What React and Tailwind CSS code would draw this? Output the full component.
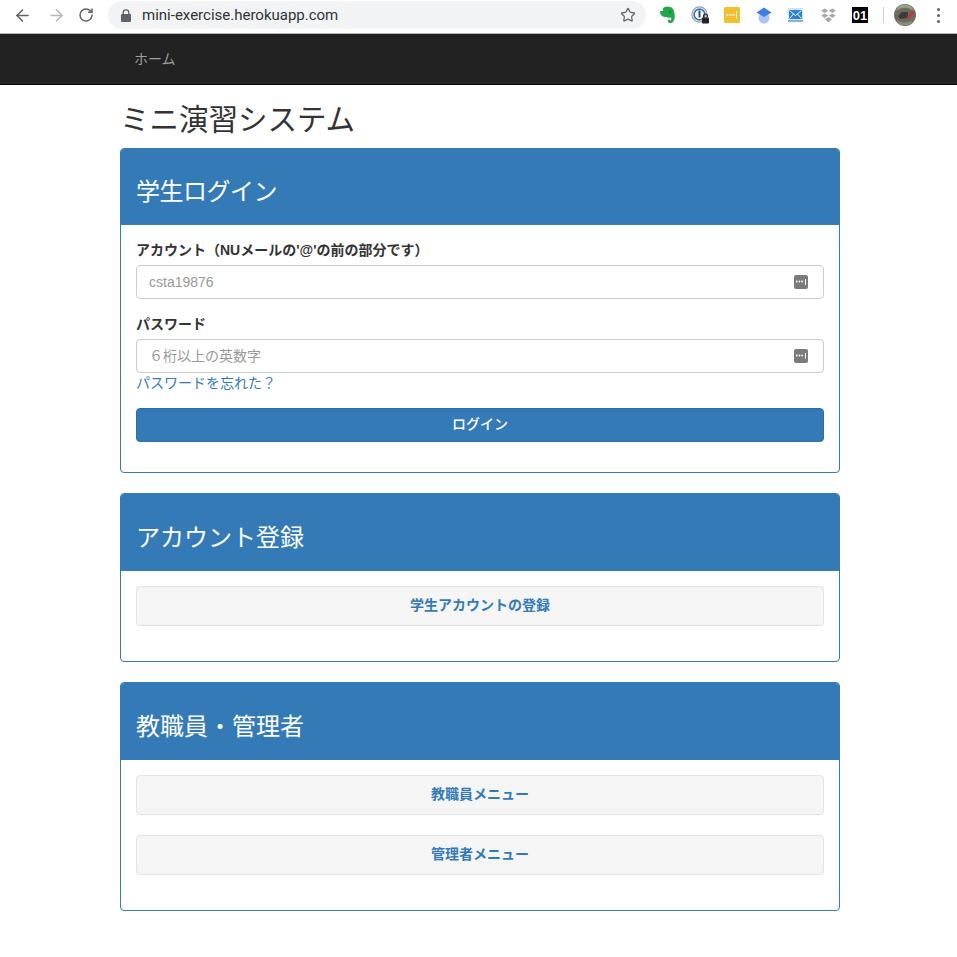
import { ArrowLeft, ArrowRight, RotateCw, Star } from "lucide-react";

const FONT = "font-['Liberation_Sans','Noto_Sans_CJK_JP',sans-serif]";

// extension icons in the browser toolbar
const Evernote = () => (
  <svg width="17" height="18" viewBox="0 0 17 18">
    <path d="M4 2.5 Q4.5 1 6 1 Q9 0 11 1 Q14.5 1.5 15.5 7 Q16.5 13 14 16 Q11.5 18 9.5 16.5 Q8 14.5 10 13.5 Q12 13.5 11.5 15 Q13 13 12 11.5 Q9 12 7 11 Q3 11.5 1.5 8 Q0.5 6.5 1 5 L4 5 Z" fill="#22a84a" />
    <circle cx="11.2" cy="6" r="1" fill="#0d7a35" />
  </svg>
);

const OnePassword = () => (
  <svg width="19" height="19" viewBox="0 0 19 19">
    <circle cx="8.5" cy="8.5" r="7.6" fill="#fff" stroke="#9a9a9a" strokeWidth="1.2" />
    <circle cx="8.5" cy="8.5" r="5.4" fill="none" stroke="#2f78c4" strokeWidth="1.7" />
    <rect x="7.5" y="4.5" width="2" height="7" fill="#2f4f70" />
    <rect x="11" y="11.5" width="7" height="6" rx="1" fill="#222" />
    <path d="M12.5 11.5 V10 a2 2 0 0 1 4 0 V11.5" fill="none" stroke="#222" strokeWidth="1.1" />
  </svg>
);

const Dots = () => (
  <svg width="16" height="16" viewBox="0 0 16 16">
    <rect width="16" height="16" rx="1.5" fill="#f0c02f" />
    <circle cx="3.5" cy="8" r="1" fill="#fff" />
    <circle cx="6.5" cy="8" r="1" fill="#fff" />
    <circle cx="9.5" cy="8" r="1" fill="#fff" />
    <rect x="12" y="4.5" width="1" height="7" fill="#fff" />
  </svg>
);

const Cap = () => (
  <svg width="16" height="17" viewBox="0 0 16 17">
    <circle cx="8" cy="11" r="5.5" fill="#a9c4f5" />
    <path d="M0.5 5.5 L8 0.5 L15.5 5.5 L8 10 Z" fill="#3f7fe0" />
  </svg>
);

const Mail = () => (
  <svg width="15" height="14" viewBox="0 0 15 14">
    <rect width="15" height="14" fill="#cfe4f3" />
    <rect x="1" y="2" width="13" height="9" fill="#2a84c6" />
    <path d="M1.5 2.5 L7.5 7.5 L13.5 2.5 M1.5 10.5 L5.5 6 M13.5 10.5 L9.5 6" fill="none" stroke="#fff" strokeWidth="0.9" />
    <rect y="12" width="15" height="2" fill="#7fb5dc" />
  </svg>
);

const Dropbox = () => (
  <svg width="15" height="15" viewBox="0 0 15 15" fill="#a8a8a8">
    <path d="M3.7 0.5 L7.2 2.8 L3.7 5 L0.2 2.8 Z" />
    <path d="M11.3 0.5 L14.8 2.8 L11.3 5 L7.8 2.8 Z" />
    <path d="M3.7 5.4 L7.2 7.6 L3.7 9.9 L0.2 7.6 Z" />
    <path d="M11.3 5.4 L14.8 7.6 L11.3 9.9 L7.8 7.6 Z" />
    <path d="M7.5 9 L11 11.2 L7.5 14.5 L4 11.2 Z" />
  </svg>
);

const Avatar = () => (
  <svg width="22" height="22" viewBox="0 0 22 22">
    <circle cx="11" cy="11" r="11" fill="#6d6b5c" />
    <path d="M2 7 Q11 0 20 7 L17 2 Q11 -1 5 2 Z" fill="#93a08c" />
    <path d="M3 16 Q11 21 19 16 L17 20 Q11 23 5 20 Z" fill="#8f8a78" />
    <path d="M4 12 L8 8 L14 8 L14 14 L6 15 Z" fill="#3a3d40" />
    <path d="M12 14 L19 7 L20.5 9 L14 15 Z" fill="#c8323a" />
  </svg>
);

const LockIcon = () => (
  <svg width="10" height="13" viewBox="0 0 10 13" className="shrink-0">
    <rect x="0" y="5" width="10" height="8" rx="1" fill="#5f6368" />
    <path d="M2.2 5.5 V3.6 a2.8 2.8 0 0 1 5.6 0 V5.5" fill="none" stroke="#5f6368" strokeWidth="1.3" />
  </svg>
);

const KeyIcon = () => (
  <svg width="14" height="14" viewBox="0 0 14 14" className="shrink-0">
    <rect width="14" height="14" rx="2" fill="#7b7b7b" />
    <circle cx="2.8" cy="6.5" r="0.9" fill="#fff" />
    <circle cx="5.5" cy="6.5" r="0.9" fill="#fff" />
    <circle cx="8.2" cy="6.5" r="0.9" fill="#fff" />
    <rect x="11" y="4" width="1" height="6" fill="#fff" />
  </svg>
);

const Toolbar = () => (
  <div className="flex h-[34px] items-start border-b border-[#b5b5b5] bg-white">
    <div className="flex h-[30px] w-[108px] items-center gap-[15px] pl-[13px] text-[#5f6368]">
      <ArrowLeft size={19} strokeWidth={2} />
      <ArrowRight size={19} strokeWidth={2} className="text-[#b6b8bb]" />
      <RotateCw size={16} strokeWidth={2.2} className="-ml-[3px]" />
    </div>
    <div className="mt-[1px] flex h-[28px] w-[538px] items-center rounded-full bg-[#f1f3f4] pl-[13px] pr-[10px]">
      <LockIcon />
      <span className="ml-[11px] flex-1 font-['Roboto',sans-serif] text-[15px] text-[#303336]">mini-exercise.herokuapp.com</span>
      <Star size={16} strokeWidth={1.8} className="text-[#5f6368]" />
    </div>
    <div className="flex h-[30px] flex-1 items-center pl-[10px]">
      <div className="flex w-[23px] justify-center"><Evernote /></div>
      <div className="ml-[10px] flex w-[23px] justify-center"><OnePassword /></div>
      <div className="ml-[8px] flex w-[23px] justify-center"><Dots /></div>
      <div className="ml-[9px] flex w-[23px] justify-center"><Cap /></div>
      <div className="ml-[9px] flex w-[23px] justify-center"><Mail /></div>
      <div className="ml-[10px] flex w-[23px] justify-center"><Dropbox /></div>
      <div className="ml-[12px] flex h-[16px] w-[16px] items-center justify-center bg-black font-['Liberation_Sans',sans-serif] text-[13px] font-bold leading-none text-white">01</div>
      <div className="ml-[15px] h-[16px] w-px bg-[#d0d0d0]" />
      <div className="ml-[10px]"><Avatar /></div>
      <div className="ml-[21px] flex flex-col gap-[3px]">
        <span className="h-[3px] w-[3px] rounded-full bg-[#5f6368]" />
        <span className="h-[3px] w-[3px] rounded-full bg-[#5f6368]" />
        <span className="h-[3px] w-[3px] rounded-full bg-[#5f6368]" />
      </div>
    </div>
  </div>
);

const Panel = ({ title, children, bodyClass, headClass = "h-[77px] pt-[10px]" }) => (
  <section className="rounded-[4px] border border-[#337ab7] bg-white">
    <div className={`flex items-center rounded-t-[3px] bg-[#337ab7] px-[15px] text-[24px] text-white ${headClass}`}>{title}</div>
    <div className={bodyClass}>{children}</div>
  </section>
);

const Field = ({ label, placeholder, className }) => (
  <div className={className}>
    <label className="mb-[5px] block text-[14px] font-bold leading-[20px] text-[#333]">{label}</label>
    <div className="flex h-[34px] items-center rounded-[4px] border border-[#ccc] bg-white pl-[12px] pr-[15px] text-[14px] text-[#999]">
      <span className="flex-1">{placeholder}</span>
      <KeyIcon />
    </div>
  </div>
);

const LinkButton = ({ children }) => (
  <a className="flex h-[40px] items-center justify-center rounded-[4px] border border-[#e3e3e3] bg-[#f5f5f5] pb-[2px] text-[14px] font-bold text-[#337ab7]">{children}</a>
);

export default function App() {
  return (
    <div className={`min-h-[957px] bg-white ${FONT} text-[#333]`}>
      <Toolbar />
      <nav className="h-[51px] border-b border-[#080808] bg-[#222] pl-[134px] text-[14px] leading-[50px] text-[#9d9d9d]">ホーム</nav>
      <main className="ml-[120px] w-[720px]">
        <h1 className="mt-[14px] mb-[7px] h-[42px] text-[29.5px] font-normal leading-[42px]">ミニ演習システム</h1>
        <div className="flex flex-col gap-[20px]">
          <Panel title="学生ログイン" headClass="h-[76px] pt-[10px] tracking-[-0.5px]" bodyClass="px-[15px] pt-[15px] pb-[30px]">
            <Field label="アカウント（NUメールの'@'の前の部分です）" placeholder="csta19876" className="mb-[15px]" />
            <Field label="パスワード" placeholder="６桁以上の英数字" />
            <a className="mb-[15px] block text-[14px] leading-[20px] text-[#337ab7]">パスワードを忘れた？</a>
            <button className="flex h-[34px] w-full items-center justify-center rounded-[4px] border border-[#2e6da4] bg-[#337ab7] pb-[2px] text-[14px] font-medium text-white">ログイン</button>
          </Panel>
          <Panel title="アカウント登録" bodyClass="px-[15px] pt-[15px] pb-[35px]">
            <LinkButton>学生アカウントの登録</LinkButton>
          </Panel>
          <Panel title="教職員・管理者" bodyClass="flex flex-col gap-[20px] px-[15px] pt-[15px] pb-[35px]">
            <LinkButton>教職員メニュー</LinkButton>
            <LinkButton>管理者メニュー</LinkButton>
          </Panel>
        </div>
      </main>
    </div>
  );
}
